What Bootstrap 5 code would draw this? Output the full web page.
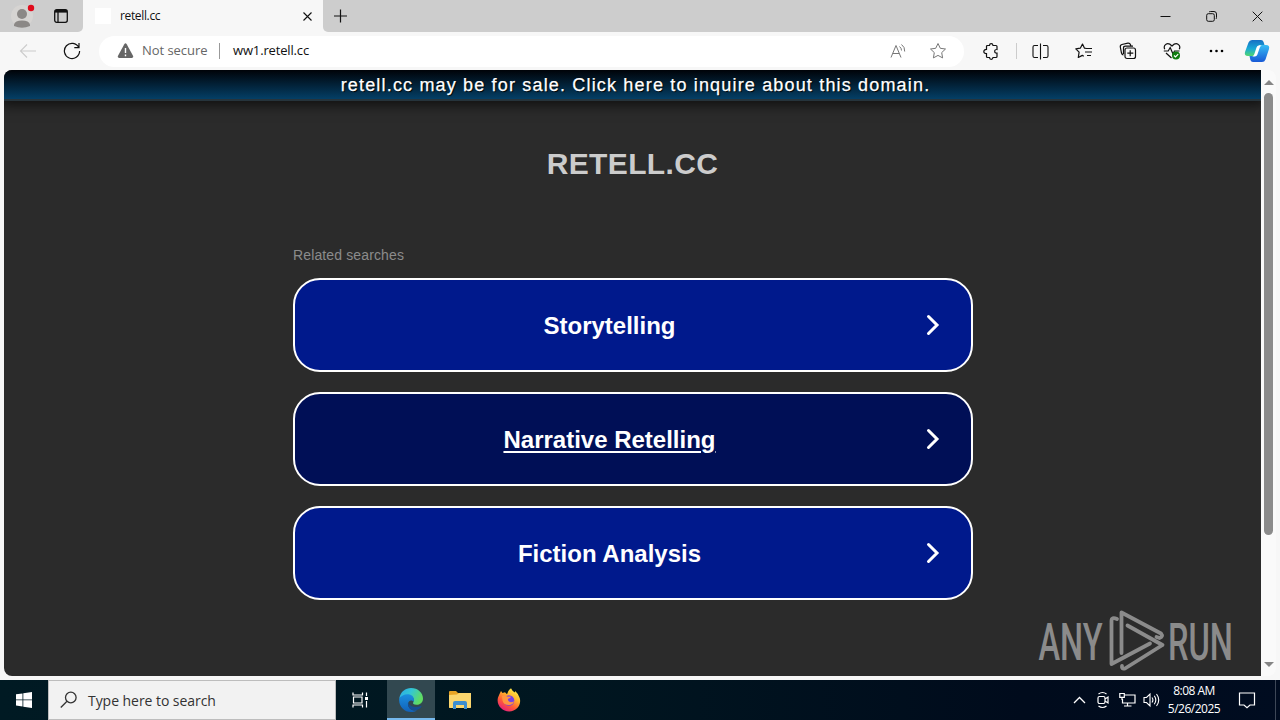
<!DOCTYPE html>
<html lang="en">
<head>
    <meta charset="UTF-8">
    <meta name="viewport" content="width=device-width, initial-scale=1.0">
    <title>retell.cc</title>
    <link href="https://cdn.jsdelivr.net/npm/bootstrap@5.3.0/dist/css/bootstrap.min.css" rel="stylesheet">
    <style>
        body {
            height: 720px;
            background: #f7f7f7;
            font-family: "Open Sans", "Noto Sans", sans-serif;
            color: #111;
        }

        svg { display: block; flex: none; }
        .stroke { fill: none; stroke: currentColor; }

        /* Title bar */
        .title-bar { height: 32px; background: #cdcdcd; }
        .left-tools { width: 83px; border-bottom-right-radius: 5px; padding-left: 10px; }
        .tabs-wrap { background: #f7f7f7; }
        .browser-tab { width: 240px; background: #f7f7f7; padding: 0 10px 0 12px; font-size: 12px; letter-spacing: -.35px; }
        .favicon { width: 16px; height: 16px; background: #fff; margin-right: 9px; }
        .bar-rest { background: #cdcdcd; border-bottom-left-radius: 5px; padding-left: 9px; }
        .win-btn { width: 46px; }

        /* Toolbar */
        .tool-bar { height: 38px; background: #f7f7f7; }
        .nav-cell { width: 44px; flex: none; }
        .nav-cell.refresh { margin: 0 5px 0 2px; }
        .nav-cell.extensions { margin-left: 5px; }
        .nav-cell.copilot { width: 42px; }
        .address { width: 865px; height: 31px; flex: none; background: #fff; border-radius: 16px; padding: 0 17px 0 18px; font-size: 13px; letter-spacing: -.05px; }
        .address .state { color: #666; margin-left: 8px; width: 70px; white-space: nowrap; }
        .address .sep { width: 1px; height: 16px; background: #999; margin: 0 13px 0 7px; }
        .address .url { letter-spacing: -.15px; }
        .tool-sep { width: 1px; height: 16px; background: #ccc; margin: 0 1px 0 3px; }

        /* Page */
        .view { height: 606px; padding: 0 4px; }
        .page { width: 1257px; background: #2b2b2b; border-radius: 8px 0 0 8px; overflow: hidden; font-family: "Liberation Sans", Arial, sans-serif; }
        .sale-bar {
            height: 31px;
            background: linear-gradient(#000308, #043f66);
            border-bottom: 2px solid #26343c;
            box-shadow: 0 0 12px 4px rgba(0, 0, 0, .65);
            color: #fff;
            font-size: 18px;
            line-height: 30px;
            letter-spacing: 1.17px;
            -webkit-text-stroke: .25px #fff;
            padding-left: 6px;
            text-shadow: 1px 1px 1px #000;
        }
        .domain { font-size: 30px; line-height: 34px; font-weight: bold; letter-spacing: .35px; color: #ccc; margin: 46px 0 0; }
        .results { width: 680px; margin: 65px auto 0; }
        .related { color: #8b8b8b; font-size: 14px; line-height: 18px; letter-spacing: .13px; margin-bottom: 14px; padding-left: .5px; }
        .result-link {
            height: 94px;
            border: 2px solid #fff;
            border-radius: 27px;
            background: #00198c;
            color: #fff;
            font-size: 24px;
            font-weight: bold;
            text-decoration: none;
        }
        .result-link.hovered { background: #000f56; text-decoration: underline; text-decoration-thickness: 2px; text-underline-offset: 3px; }
        .result-link .caption { width: 629px; padding: 2px 0 0 1px; }

        .scroll-track { width: 15px; background: #fafafa; border-radius: 0 8px 8px 0; padding: 10px 0 9px; }
        .thumb { width: 9px; height: 442px; border-radius: 5px; background: #8b8b8b; margin-top: 8px; }

        .watermark { left: 1030px; top: 604px; }

        /* Taskbar */
        .task-bar { height: 40px; margin-top: 4px; background: linear-gradient(90deg, #001a23, #001620 45%, #000b1c 80%, #000c20); color: #fff; }
        .task-cell { width: 48px; }
        .task-cell.active-app { background: #324850; border-bottom: 2px solid #76b9ed; padding-top: 2px; margin: 0 1px 0 3px; }
        .search-box { width: 288px; height: 40px; background: #f2f2f2; border: 1px solid #bdbdbd; color: #333; padding-left: 11px; font-size: 14px; }
        .search-box span { margin-left: 10px; letter-spacing: -.05px; }
        .tray-cell { width: 24px; }
        .clock { width: 62px; font-size: 12px; line-height: 18px; letter-spacing: -.5px; }
        .notify { margin: 0 19px 0 13px; }
        .show-desktop { width: 5px; border-left: 1px solid #3d4757; }
    </style>
</head>
<body class="d-flex flex-column overflow-hidden">
    <!-- Tabs -->
    <header class="title-bar d-flex">
        <div class="tabs-wrap d-flex">
            <div class="left-tools title-bar d-flex align-items-center">
                <svg width="28" height="28" viewBox="0 0 28 28">
                    <circle cx="12" cy="14" r="11" fill="#d6d4d2"/>
                    <circle cx="12" cy="12" r="5" fill="#8b8886"/>
                    <path d="M4 24v-1.500q1-4 8-4t8 4V24q-8 3.500-16 0z" fill="#8b8886"/>
                    <circle cx="21" cy="6" r="3.2" fill="#e00b1c"/>
                </svg>
                <svg class="stroke ms-3" width="14" height="14" viewBox="0 0 14 14" stroke-width="1.3" style="margin-right:1px">
                    <rect x=".7" y=".7" width="12.6" height="12.6" rx="2"/>
                    <path d="M1 2.300h12" stroke-width="2.600"/>
                    <path d="M4 3v10"/>
                </svg>
            </div>
        </div>
        <div class="browser-tab d-flex align-items-center">
            <span class="favicon"></span>
            <span>retell.cc</span>
            <svg class="stroke ms-auto" width="11" height="11" viewBox="0 0 11 11" stroke-width="1.1"><path d="M1.500 1.500l8 8M9.500 1.500l-8 8"/></svg>
        </div>
        <div class="tabs-wrap flex-grow-1 d-flex">
            <div class="bar-rest flex-grow-1 d-flex align-items-center">
                <svg class="stroke" width="16" height="16" viewBox="0 0 16 16" stroke-width="1.2"><path d="M8.500 1.500v13M2 8h13"/></svg>
                <div class="ms-auto d-flex">
                    <span class="win-btn d-flex justify-content-center align-items-center"><svg class="stroke" width="11" height="11" viewBox="0 0 11 11"><path d="M.5 5.500h10"/></svg></span>
                    <span class="win-btn d-flex justify-content-center align-items-center"><svg class="stroke" width="11" height="11" viewBox="0 0 11 11"><rect x=".7" y="2.700" width="7.600" height="7.600" rx="1.600"/><path d="M3 1q.5-.5 1.500-.5H8q2.500 0 2.500 2.500v3.500q0 1-.6 1.500"/></svg></span>
                    <span class="win-btn d-flex justify-content-center align-items-center"><svg class="stroke" width="11" height="11" viewBox="0 0 11 11"><path d="M.7.7l9.600 9.600M10.300.7L.7 10.300"/></svg></span>
                </div>
            </div>
        </div>
    </header>

    <!-- Address bar -->
    <nav class="tool-bar d-flex align-items-center">
        <span class="nav-cell d-flex justify-content-center ms-1" style="color:#ccc"><svg class="stroke ms-1" width="18" height="16" viewBox="0 0 18 16" stroke-width="1.100"><path d="M17 8H2M8 1.500L1.500 8 8 14.500"/></svg></span>
        <span class="nav-cell refresh d-flex justify-content-center"><svg class="stroke" width="18" height="18" viewBox="0 0 18 18" stroke-width="1.200"><path d="M15.800 5.500A7.600 7.600 0 1 0 16.600 9M16 1v4.700h-4.700"/></svg></span>
        <div class="address d-flex align-items-center">
            <svg width="17" height="16" viewBox="0 0 17 16"><path d="M7.300 1.200q1.200-1.700 2.400 0l6.300 11.600q.8 1.900-1.200 2.200H2.200Q.2 14.700 1 12.800z" fill="#666"/><path d="M8.500 5v5M8.500 11.500v1.700" stroke="#fff" stroke-width="1.400"/></svg>
            <span class="state">Not secure</span>
            <span class="sep"></span>
            <span class="url">ww1.retell.cc</span>
            <svg class="stroke ms-auto" width="17" height="16" viewBox="0 0 17 16" style="color:#777"><path d="M1 14.500L6 2.500l5 12M2.800 10.500h6.400M9.500 3.500q2 1.500 2 4M11.500 1.500q3.500 2.500 3.200 7"/></svg>
            <svg class="stroke" width="18" height="18" viewBox="0 0 18 18" style="color:#777;margin-left:22px"><path d="M9 1.500l2.300 4.800 5.200.7-3.800 3.600.9 5.300L9 13.400l-4.600 2.500.9-5.300L1.500 7l5.200-.7z" stroke-linejoin="round"/></svg>
        </div>
        <span class="nav-cell extensions d-flex justify-content-center"><svg class="stroke" width="16" height="17" viewBox="0 0 16 17" stroke-width="1.200"><path d="M3.500 3.500q0-1 1-1h2q.1-1.900 1.700-1.900t1.800 1.900h3q1 0 1 1v3q-2.300-.2-2.300 1.800t2.300 1.800v3.400q0 1-1 1h-3q-.2 1.900-1.800 1.900t-1.700-1.900h-2q-1 0-1-1v-2.800Q.8 10.700.8 8.500t2.700-2.200z"/></svg></span>
        <span class="tool-sep"></span>
        <span class="nav-cell d-flex justify-content-center"><svg class="stroke" width="17" height="17" viewBox="0 0 17 17" stroke-width="1.100"><path d="M8.500.5v16M6 2.500H2.500Q1 2.500 1 4v9q0 1.500 1.500 1.500H6M11 2.500h3.500q1.500 0 1.500 1.500v9q0 1.500-1.500 1.500H11"/></svg></span>
        <span class="nav-cell d-flex justify-content-center"><svg class="stroke" width="18" height="18" viewBox="0 0 18 18" stroke-width="1.200"><path d="M11.500 6.500l-2-.3L7.500 2 5.300 6.200l-4.500.7 3.300 3.300-.8 5.300 4-2.100 1.500.8M10.500 6.500H17M10 10h7M12 13.500h4" stroke-linejoin="round"/></svg></span>
        <span class="nav-cell d-flex justify-content-center"><svg class="stroke" width="18" height="18" viewBox="0 0 18 18" stroke-width="1.200"><rect x="6" y="6" width="10.500" height="10.500" rx="2"/><path d="M11.200 8.300v6M8.300 11.200h6M4.500 13q-1.500-.2-2-2l-1.200-6q-.3-2 1.600-2.500l6-1.300q2-.2 2.600 1.500l.4 1.200M4.500 12V6q0-1.800 2-1.800H14"/></svg></span>
        <span class="nav-cell d-flex justify-content-center"><svg class="stroke" width="18" height="18" viewBox="0 0 18 18" stroke-width="1.200"><path d="M1.700 7.200Q.3 3.700 3 2.200T9 4q3.200-3.300 6-1.800t1.300 5M.8 9h4.400l2-3.500L10 12l1.500-3h5M3 11l5.500 5"/><circle cx="13" cy="13.500" r="4" fill="#107c10" stroke="none"/><path d="M11 13.500l1.500 1.500 2.700-2.800" stroke="#fff"/></svg></span>
        <span class="nav-cell d-flex justify-content-center"><svg width="15" height="4" viewBox="0 0 15 4"><circle cx="2" cy="2" r="1.300"/><circle cx="7.500" cy="2" r="1.300"/><circle cx="13" cy="2" r="1.300"/></svg></span>
        <span class="nav-cell copilot d-flex justify-content-center pe-1">
            <svg width="26" height="24" viewBox="0 0 26 24">
                <defs>
                    <linearGradient id="cpA" x1="0" y1="0" x2="0" y2="1"><stop offset="0" stop-color="#166fc4"/><stop offset=".55" stop-color="#18a9d6"/><stop offset="1" stop-color="#52d66f"/></linearGradient>
                    <linearGradient id="cpB" x1="0" y1="0" x2="0" y2="1"><stop offset="0" stop-color="#36bdf5"/><stop offset="1" stop-color="#1859d6"/></linearGradient>
                </defs>
                <path d="M8 1h9q2 0 2.600 2l.9 3h-4q-2 0-2.600 2L11 15q-.7 2-2.500 2H4q-4 0-3-4L4.500 3.500Q5.500 1 8 1z" fill="url(#cpA)"/>
                <path d="M18 23H9q-2 0-2.600-2l-.9-4h4q2 0 2.600-2L15 8q.7-2 2.500-2H22q4 0 3 4l-3.500 10.500Q20.500 23 18 23z" fill="url(#cpB)"/>
                <path d="M12.500 8.500q.6-2 2.500-2h2.800q-1.500.5-2 2l-2.500 7.200q-.6 1.800-2.500 1.800H8.200q1.600-.6 2-2z" fill="#fff"/>
            </svg>
        </span>
    </nav>

    <!-- Parked page -->
    <main class="view d-flex">
        <div class="page d-flex flex-column">
            <div class="sale-bar text-center flex-shrink-0">retell.cc may be for sale. Click here to inquire about this domain.</div>
            <h1 class="domain text-center">RETELL.CC</h1>
            <div class="results">
                <div class="related">Related searches</div>
                <div class="d-grid" style="gap:20px">
                    <a href="#" class="result-link d-flex align-items-center">
                        <span class="caption text-center">Storytelling</span>
                        <svg class="stroke" width="20" height="24" viewBox="0 0 20 24" stroke-width="3"><path d="M4.500 3.500L13 12l-8.500 8.500" stroke-linecap="round"/></svg>
                    </a>
                    <a href="#" class="result-link hovered d-flex align-items-center">
                        <span class="caption text-center">Narrative Retelling</span>
                        <svg class="stroke" width="20" height="24" viewBox="0 0 20 24" stroke-width="3"><path d="M4.500 3.500L13 12l-8.500 8.500" stroke-linecap="round"/></svg>
                    </a>
                    <a href="#" class="result-link d-flex align-items-center">
                        <span class="caption text-center">Fiction Analysis</span>
                        <svg class="stroke" width="20" height="24" viewBox="0 0 20 24" stroke-width="3"><path d="M4.500 3.500L13 12l-8.500 8.500" stroke-linecap="round"/></svg>
                    </a>
                </div>
            </div>
        </div>
        <div class="scroll-track d-flex flex-column align-items-center">
            <svg width="10" height="5" viewBox="0 0 10 5"><path d="M0 5l5-5 5 5z" fill="#858585"/></svg>
            <span class="thumb"></span>
            <svg class="mt-auto" width="10" height="5" viewBox="0 0 10 5"><path d="M0 0l5 5 5-5z" fill="#858585"/></svg>
        </div>
    </main>

    <!-- Sandbox watermark laid over the desktop -->
    <svg class="watermark position-absolute" width="250" height="72" viewBox="0 0 250 72" fill="#8b8b8b" font-family="Roboto, sans-serif" font-size="52" font-weight="500">
        <text x="8.500" y="56" textLength="64" lengthAdjust="spacingAndGlyphs">ANY</text>
        <text x="138" y="56" textLength="65" lengthAdjust="spacingAndGlyphs">RUN</text>
        <g fill="none" stroke="#8b8b8b" stroke-width="3.800" stroke-linejoin="round" stroke-linecap="round">
            <path d="M91.500 49V8.500L131 29.500q2.500 3-1.500 4.500l-3-1"/>
            <path d="M97.500 21.500L132.500 41 95 64.500q-3.500 1-3-2.500"/>
            <path d="M87 15q-5.500-2.500-5.500 2V60L120 39.500"/>
        </g>
    </svg>

    <!-- Taskbar -->
    <footer class="task-bar d-flex">
        <span class="task-cell d-flex justify-content-center align-items-center"><svg width="16" height="16" viewBox="0 0 16 16" fill="#fff"><path d="M0 2.300l6.500-.9v6.100H0zM7.300 1.300L16 0v7.500H7.300zM0 8.300h6.500v6.200L0 13.600zM7.300 8.300H16V16l-8.700-1.300z"/></svg></span>
        <div class="search-box d-flex align-items-center">
            <svg class="stroke" width="18" height="18" viewBox="0 0 18 18" stroke-width="1.300"><circle cx="10.800" cy="6.500" r="5.300"/><path d="M7 10.300L.8 16.500"/></svg>
            <span>Type here to search</span>
        </div>
        <span class="task-cell d-flex justify-content-center align-items-center"><svg class="stroke" width="17" height="16" viewBox="0 0 17 16" stroke-width="1.200"><path d="M1 .5v2.500h9.500V.5M1 15.500V13h9.500v2.500M1.500 5h8.500v6H1.500zM14.500.5v3.500M14.500 9v6.500"/><path d="M13 5h3v3h-3z" fill="#fff" stroke="none"/></svg></span>
        <span class="task-cell active-app d-flex justify-content-center align-items-center">
            <svg width="24" height="24" viewBox="0 0 24 24">
                <defs>
                    <linearGradient id="edA" x1="0" y1="0" x2="1" y2=".4"><stop offset="0" stop-color="#2aa8e8"/><stop offset=".5" stop-color="#33c6d5"/><stop offset="1" stop-color="#60dc62"/></linearGradient>
                    <linearGradient id="edB" x1="0" y1="0" x2="0" y2="1"><stop offset="0" stop-color="#1b8fe0"/><stop offset="1" stop-color="#1261b8"/></linearGradient>
                </defs>
                <path d="M.3 10.500C1.500 3.500 6.500 0 12 0c7 0 12 5 12 10.500 0 4-3 6.300-6.500 6.300-3 0-4-1.300-3.200-2.500 2.200-3-1-6.500-5-6.500-4 0-7.500 1.200-9 2.700z" fill="url(#edA)"/>
                <path d="M.2 10.500C2 7.500 6 5.800 9.500 6.200c4.500.5 6.500 4.300 5 7.600-1.800-2.500-5.500-1.300-5.500 2.400 0 4.300 4.500 7 9 6.300C16 23.700 14 24 12 24 5 24-.6 18 .2 10.500z" fill="url(#edB)"/>
                <path d="M9 14.500c-.8 4.200 2.500 7.800 7 7.800 2.500 0 5-1.500 6.300-3.500.5-.8 0-1.200-.7-.8-5.600 2.500-11.100.5-12.600-3.500z" fill="#164d91"/>
            </svg>
        </span>
        <span class="task-cell d-flex justify-content-center align-items-center"><svg width="22" height="20" viewBox="0 0 22 20"><path d="M0 2q0-1 1-1h6l2 2h12q1 0 1 1v13q0 1-1 1H1q-1 0-1-1z" fill="#e8a425"/><path d="M0 5l8-.5L10 3h12v14q0 1-1 1H1q-1 0-1-1z" fill="#fbd66e"/><path d="M4 19v-6q0-2 2-2h10q2 0 2 2v6h-3v-4H7v4z" fill="#3c8ed0"/></svg></span>
        <span class="task-cell d-flex justify-content-center align-items-center" style="margin-left:1px">
            <svg width="24" height="24" viewBox="0 0 24 24">
                <defs><linearGradient id="ffA" x1=".8" y1="0" x2=".2" y2="1"><stop offset="0" stop-color="#fff44f"/><stop offset=".35" stop-color="#ffb52c"/><stop offset=".65" stop-color="#ff5a37"/><stop offset="1" stop-color="#e31587"/></linearGradient></defs>
                <path d="M2.500 6L4 3l1.500 2L8 4.300l2 2q1-4 4-6 1 2.700 4 4.200 0-1 .2-1.500 3 2.500 4.500 7c2 7-3 13.500-10.500 13.500S-1 16.500 1 9.500z" fill="url(#ffA)"/>
                <circle cx="12" cy="12.500" r="5.300" fill="#7542e5"/>
                <path d="M5 8q2.500-1.500 5 .5l4 .3q-.5 1.500-3 2-.5 2.500 2 3.200 2 .5 4-.8-1 3.800-5 3.800-5.500 0-6.500-4.500z" fill="#ff9640"/>
            </svg>
        </span>
        <div class="ms-auto d-flex align-items-center">
            <span class="tray-cell d-flex justify-content-center"><svg class="stroke" width="13" height="8" viewBox="0 0 13 8" stroke-width="1.300"><path d="M1 7l5.500-5.500L12 7"/></svg></span>
            <span class="tray-cell d-flex justify-content-center"><svg class="stroke" width="14" height="18" viewBox="0 0 14 18" stroke-width="1.200"><rect x="2" y="5.500" width="7" height="7" rx="1.500"/><path d="M9 8l3-2v6l-3-2M2.500 3Q6.500 0 10.500 3M2.500 15q4 3 8 0"/></svg></span>
            <span class="tray-cell d-flex justify-content-center"><svg class="stroke" width="17" height="16" viewBox="0 0 17 16" stroke-width="1.200"><path d="M6 3h10v8H3.500V7M8.500 11v3M5 14h7.500M.8 1.500h4.500v3.800H.8zM3 5.500V8"/></svg></span>
            <span class="tray-cell d-flex justify-content-center"><svg class="stroke" width="17" height="16" viewBox="0 0 17 16" stroke-width="1.100"><path d="M1 5.500h2.500L7 2v12l-3.500-3.500H1zM9 5.500q1.800 2.500 0 5M11.300 3.700q3 4.300 0 8.600M13.500 2q4.500 6 0 12"/></svg></span>
            <div class="clock text-center"><div>8:08 AM</div><div>5/26/2025</div></div>
            <svg class="stroke notify" width="18" height="18" viewBox="0 0 18 18" stroke-width="1.200"><path d="M1.500 2h15v12H12l-3 2.700L6 14H1.500z"/></svg>
            <span class="show-desktop align-self-stretch"></span>
        </div>
    </footer>

    <script src="https://cdn.jsdelivr.net/npm/bootstrap@5.3.0/dist/js/bootstrap.bundle.min.js"></script>
</body>
</html>
